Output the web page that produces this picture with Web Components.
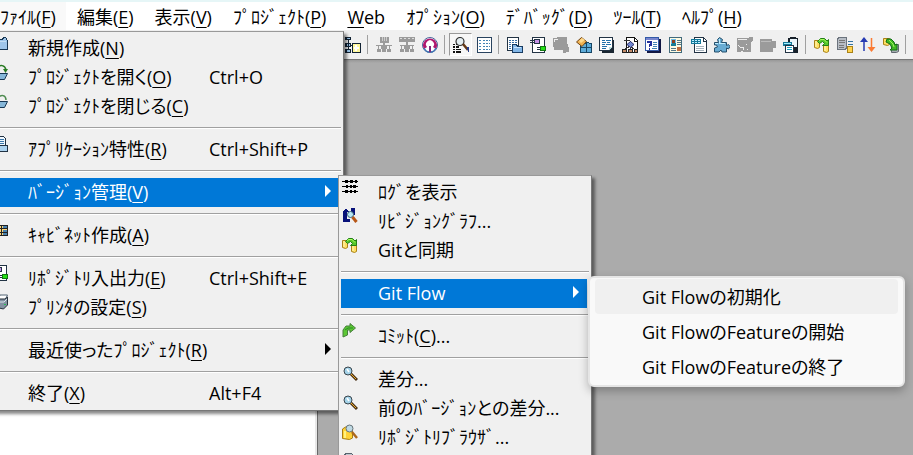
<!DOCTYPE html>
<html lang="ja">
<head>
<meta charset="utf-8">
<title>Git Flow</title>
<style>
html,body{height:100%}
body{margin:0;overflow:hidden;background:#ababab;color:#000;font:18px/29px "Open Sans","Noto Sans CJK JP",sans-serif;font-feature-settings:"palt"}
</style>
</head>
<body>
<app-window>
  <menu-bar slot="menubar">
    <bar-item open>ﾌｧｲﾙ(<u>F</u>)</bar-item>
    <bar-item>編集(<u>E</u>)</bar-item>
    <bar-item>表示(<u>V</u>)</bar-item>
    <bar-item>ﾌﾟﾛｼﾞｪｸﾄ(<u>P</u>)</bar-item>
    <bar-item><u>W</u>eb</bar-item>
    <bar-item>ｵﾌﾟｼｮﾝ(<u>O</u>)</bar-item>
    <bar-item>ﾃﾞﾊﾞｯｸﾞ(<u>D</u>)</bar-item>
    <bar-item>ﾂｰﾙ(<u>T</u>)</bar-item>
    <bar-item>ﾍﾙﾌﾟ(<u>H</u>)</bar-item>
  </menu-bar>
  <tool-bar slot="toolbar" items="module | tree1 tree2 upload | find* list | sheetfolder inout grayshape cubes pages flow help card form puzzle graychart graybox device | sync serverdb updown pull |"></tool-bar>

  <menu-panel class="file" slot="popups">
    <menu-item icon="folder">新規作成(<u>N</u>)</menu-item>
    <menu-item icon="open" key="Ctrl+O">ﾌﾟﾛｼﾞｪｸﾄを開く(<u>O</u>)</menu-item>
    <menu-item icon="close">ﾌﾟﾛｼﾞｪｸﾄを閉じる(<u>C</u>)</menu-item>
    <menu-line></menu-line>
    <menu-item icon="props" key="Ctrl+Shift+P">ｱﾌﾟﾘｹｰｼｮﾝ特性(<u>R</u>)</menu-item>
    <menu-line></menu-line>
    <menu-item active sub>ﾊﾞｰｼﾞｮﾝ管理(<u>V</u>)</menu-item>
    <menu-line></menu-line>
    <menu-item icon="cabinet">ｷｬﾋﾞﾈｯﾄ作成(<u>A</u>)</menu-item>
    <menu-line></menu-line>
    <menu-item icon="inout" key="Ctrl+Shift+E">ﾘﾎﾟｼﾞﾄﾘ入出力(<u>E</u>)</menu-item>
    <menu-item icon="printer">ﾌﾟﾘﾝﾀの設定(<u>S</u>)</menu-item>
    <menu-line></menu-line>
    <menu-item sub>最近使ったﾌﾟﾛｼﾞｪｸﾄ(<u>R</u>)</menu-item>
    <menu-line></menu-line>
    <menu-item key="Alt+F4">終了(<u>X</u>)</menu-item>
  </menu-panel>

  <menu-panel class="version" slot="popups">
    <menu-item icon="log">ﾛｸﾞを表示</menu-item>
    <menu-item icon="graph">ﾘﾋﾞｼﾞｮﾝｸﾞﾗﾌ...</menu-item>
    <menu-item icon="sync">Gitと同期</menu-item>
    <menu-line></menu-line>
    <menu-item active sub>Git Flow</menu-item>
    <menu-line></menu-line>
    <menu-item icon="commit">ｺﾐｯﾄ(<u>C</u>)...</menu-item>
    <menu-line></menu-line>
    <menu-item icon="lens">差分...</menu-item>
    <menu-item icon="lens">前のﾊﾞｰｼﾞｮﾝとの差分...</menu-item>
    <menu-item icon="repo">ﾘﾎﾟｼﾞﾄﾘﾌﾞﾗｳｻﾞ...</menu-item>
    <menu-item icon="disc"></menu-item>
  </menu-panel>

  <flow-popup slot="popups">
    <flow-item hover>Git Flowの初期化</flow-item>
    <flow-item>Git FlowのFeatureの開始</flow-item>
    <flow-item>Git FlowのFeatureの終了</flow-item>
  </flow-popup>
</app-window>

<script>
const ICONS = {
module:'<path d="M0 0h6v3H0zM0 6h6v4H0zM0 12h6v4H0z" fill="#123"/><path d="M2 1h3v1H2zM2 7h3v2H2zM2 13h3v2H2z" fill="#9cc8ee"/><path d="M3 3v10M6 8h2" stroke="#123"/><path d="M7.500 6.500h8v9h-8z" fill="#fff79a" stroke="#123"/><path d="M11 8v6M9 11h5" stroke="#fff" stroke-width="2"/>',
tree1:'<path d="M4 0h9v6H4zM0 8h16v1H0zM7 6h2v6H7zM5 9h6v3H5zM2 9h1v3H2zM13 9h1v3h-1zM1 12h4v3H1zM6 12h4v3H6zM11 12h4v3h-4z" fill="#9b9b9b"/><path d="M6 0v4M8 0v4M10 0v4" stroke="#ccc"/>',
tree2:'<path d="M0 0h16v5H0zM7 5h2v7H7zM1 8h14v1H1zM5 9h6v3H5zM2 9h1v3H2zM13 9h1v3h-1zM1 12h4v3H1zM6 12h4v3H6zM11 12h4v3h-4z" fill="#9b9b9b"/><path d="M1 1.500h2M5 1.500h2M9 1.500h2M13 1.500h2" stroke="#ddd"/>',
upload:'<g shape-rendering="auto"><circle cx="8" cy="8" r="7.500" fill="#fff" stroke="#44639a"/><path d="M2 12a7 7 0 1 1 12 0l-3-2a4 4 0 1 0-6 0z" fill="#b0186f"/><path d="M8 3l4 5H9.500v5h-3V8H4z" fill="#fff"/><path d="M8 9v6" stroke="#7e2a7d" stroke-width="2"/><path d="M2 11q2 4 5 4M14 11q-2 4-5 4" stroke="#4176b4" fill="none" stroke-width="1.500"/></g>',
find:'<path d="M0 7.500h4M0 10h6M0 12.500h8M0 15h8" stroke="#111" stroke-width="1.500" stroke-dasharray="2 1 5 1"/><g shape-rendering="auto"><circle cx="7" cy="4.500" r="4" fill="#e4eef2" stroke="#333" stroke-width="1.200"/><path d="M10 7l5 6" stroke="#633817" stroke-width="2.500"/></g><path d="M14 10h2v5h-1z" fill="#263b88"/>',
list:'<path d="M1.500.5h14v15h-14z" fill="#fff" stroke="#29435f"/><path d="M3 3.500h2M3 6.500h2M3 9.500h2M3 12.500h2M7 3.500h7M7 6.500h7M7 9.500h7M7 12.500h7" stroke="#4383b4" stroke-dasharray="2 1"/>',
sheetfolder:'<path d="M.5.500h11v13H.5z" fill="#fff" stroke="#234"/><path d="M2 3.500h8M2 5.500h8M2 7.500h8M2 9.500h8M2 11.500h5" stroke="#3a6fa5" stroke-dasharray="2 1"/><path d="M5.500 7.500h4l1 2h5v6h-10z" fill="#83b7e8" stroke="#183c62"/><path d="M7 10.500h7" stroke="#c6e3ff"/>',
inout:'<path d="M2.500.5h12v15h-12z" fill="#fff" stroke="#234"/><path d="M0 3.500h5M0 5.500h5M7 10.500h4M7 12.500h4" stroke="#234"/><path d="M4.500 2.500h5v4h-5z" fill="#c691e8" stroke="#234"/><path d="M10.500 9.500h5v4h-5z" fill="#25df16" stroke="#171"/>',
grayshape:'<path d="M0 1h4V0h10v6l2 5v4h-3v1h-3v-3H1v-3H0z" fill="#9b9b9b"/><path d="M1.500 5V2.500h3" fill="none" stroke="#eee"/>',
cubes:'<path d="M4.500 6.500h5v-1l6 1v9h-11z" fill="#5eacda" stroke="#174665"/><path d="M10.500 5v10M5 10.500h11" stroke="#174665"/><g shape-rendering="auto"><path d="M.5 5l5-4.500 5 4-4.500 5z" fill="#efb050" stroke="#714514"/><path d="M3 4l3-3 3 2-4 3z" fill="#ffd98b"/></g>',
pages:'<path d="M3 3h12v13H3z" fill="#1b2732"/><path d="M.5.500h13v10l-3 3H.5z" fill="#fff" stroke="#234"/><path d="M3 3.500h3M7 3.500h5M3 5.500h4M8 5.500h3M3 7.500h3M7 7.500h5M3 9.500h5M3 11.500h4" stroke="#2471aa"/><path d="M10 13v-3h3z" fill="#bdd"/>',
flow:'<path d="M4.500.5h8l3 3v12h-11z" fill="#fff" stroke="#111"/><path d="M12.500 1v3h3" fill="none" stroke="#111"/><path d="M2 3.500h6M8.500 4v10M8 9l-6 4M8 9l5 4" stroke="#333" fill="none"/><path d="M5 7.500l3.500-3 3.500 3-3.500 3z" fill="#7389d2" stroke="#29306d" shape-rendering="auto"/><path d="M.5 12.500h4v3h-4zM6.500 12.500h4v3h-4zM12 12.500h3v3h-3z" fill="#c48b68" stroke="#222"/>',
help:'<path d="M2 2h14v14H2z" fill="#111743"/><path d="M.5.500h13v13H.5z" fill="#fff" stroke="#345aa8"/><path d="M1 1h12v2H1z" fill="#7986ce"/><path d="M3 6V5h3v3H4.500v2M4.500 11v2" fill="none" stroke="#23309c" stroke-width="1.500"/><path d="M8 5.500h4M8 7.500h4M8 9.500h4M7 11.500h5" stroke="#4383b4"/>',
card:'<path d="M1.500.5h12v15h-12z" fill="#fffbe2" stroke="#426a7b"/><path d="M3 2h5v7H3z" fill="#6dbbe9"/><path d="M4 3h3v3H4z" fill="#8b401e"/><path d="M4 6h4v3H3V7z" fill="#167d96"/><path d="M9 3.500h4M9 5.500h4M9 7.500h4M3 11.500h5M3 13.500h5" stroke="#537688"/><path d="M9 10h4v4H9z" fill="#c27040"/>',
form:'<path d="M3.500.5h9l3 3v12h-12z" fill="#fff" stroke="#234"/><path d="M0 2h10v5H0z" fill="#12799b"/><path d="M1 3.500h8M1 5.500h8" stroke="#c4efff" stroke-dasharray="2 1"/><path d="M5 9.500h8M5 11.500h8M5 13.500h8" stroke="#a7b3bd"/><path d="M12.500 1v3h3" fill="none" stroke="#234"/>',
puzzle:'<path d="M.5 5.500h4l-1-3 2-2 3 2-1 3h5v3l2-1 1.500 2-1.500 2.500-2-1v4H8l-1-2-2 2H.5v-4l3-1-1-2h-2z" fill="#69acd3" stroke="#254f6b" shape-rendering="auto"/><path d="M5 2v4h6M1 6.500h3" fill="none" stroke="#c1edff"/>',
graychart:'<path d="M0 1h12V0h4v3l-2 3v9H0z" fill="#9b9b9b"/><path d="M1 2.500h9M1 8l2 2h3v3M9.500 7v1M10 12.500h1M4 14.500h2" fill="none" stroke="#eee"/>',
graybox:'<path d="M0 2h12v2h4v7h-3v4H0z" fill="#9b9b9b"/><path d="M1 4.500h10" stroke="#bbb"/>',
device:'<path d="M5 1h2V0h6v1h2v15H5z" fill="#17202a"/><path d="M7 2h7v8H7z" fill="#eaf5fb"/><path d="M0 5h9v4H0z" fill="#147898"/><path d="M1 6.500h7" stroke="#a5efff"/><path d="M2.500 8.500h8v7h-8z" fill="#fff" stroke="#234"/><path d="M4 10.500h5M4 12.500h5" stroke="#18a1c4"/>',
sync:'<g shape-rendering="auto"><path d="M.5 3.500h5v7l-2 1-3-1z" fill="#ffdf63" stroke="#a98218"/><path d="M9.500 7.500h5v7l-2 1-3-1z" fill="#ffdf63" stroke="#a98218"/><path d="M2 4v6M11 9v5" stroke="#fff9bb" fill="none"/><path d="M3.500 4.500l3-3h4l2.500 2.500 1.500-1.500v6h-6l2-2-2-2-3 2z" fill="#55c729" stroke="#237e17"/><path d="M5 3.500l2-1h3l3 3" fill="none" stroke="#a9ff61"/></g>',
serverdb:'<path d="M.5 1.500l2-1h7v11l-2 1H.5z" fill="#b7bdc5" stroke="#6b737d"/><path d="M2 3.500h6M2 5.500h6M2 8.500h5M2 10.500h5" stroke="#777"/><path d="M11 4.500h5M11 7.500h5" stroke="#3474a1"/><path d="M10.500 10l1-1h3l1 1v5l-1 .5h-3l-1-.5z" fill="#ffd34e" stroke="#a98218"/>',
updown:'<g shape-rendering="auto"><path d="M4 2v12" stroke="#263ab3" stroke-width="1.500"/><path d="M0 5l4-5 4 5z" fill="#263ab3"/><path d="M11.500 1v12" stroke="#fb7b33" stroke-width="1.500"/><path d="M7.500 10l4 5 4-5z" fill="#fb7b33"/></g>',
pull:'<g shape-rendering="auto"><path d="M.5 1.500h6v6l-2 1-4-1z" fill="#ffdf63" stroke="#a98218"/><path d="M8.500 7.500h7v7l-2 1h-5z" fill="#a6acb2" stroke="#626970"/><path d="M10 10h4M10 12.500h4" stroke="#ddd"/><path d="M4 2h4l3 3 1 3 2-1v6H7l2-2-2-4-4-2z" fill="#40b923" stroke="#126d18"/><path d="M6 3l4 4 1 3" stroke="#9ff15f" fill="none"/></g>',
folder:'<path d="M1.500 4.500h9l1-2h2l2 3v9h-14z" fill="#9ec5ea" stroke="#173653"/><path d="M2 6.500h12" stroke="#c3def4"/>',
open:'<g shape-rendering="auto"><path d="M1 9.500h14.500l-3 6H2z" fill="#86b7d9" stroke="#173653"/><path d="M5 4c3-4 8-3 9 2" fill="none" stroke="#287a22" stroke-width="1.500"/><path d="M11 5h5l-2.500 4z" fill="#287a22"/></g>',
close:'<g shape-rendering="auto"><path d="M1 8.500h14.500l-3 6H2z" fill="#86b7d9" stroke="#173653"/><path d="M6 5c3-4 8-3 8 2" fill="none" stroke="#4e8b50" stroke-width="1.500"/></g>',
props:'<path d="M6.500.5h5l2 2v7h-7z" fill="#eff8ff" stroke="#234"/><path d="M8 3.500h4M8 5.500h4M8 7.500h4" stroke="#3b77aa"/><path d="M3.500 9.500h12v6h-12z" fill="#acd2ee" stroke="#234"/>',
cabinet:'<path d="M3.500 3.500h12v10h-12z" fill="#ffd777" stroke="#222"/><path d="M9.500 4v9M4 6.500h12M4 10.500h12" stroke="#222"/><path d="M11 5h4M11 8.500h4M11 12h4" stroke="#4a83af" stroke-width="2"/>',
printer:'<g shape-rendering="auto"><path d="M6 6l2-5h7.500l-3 6z" fill="#fff" stroke="#567"/><path d="M2 8l3-3h8l2.500-2v8l-4 4-9-2z" fill="#8492a2" stroke="#29333d"/><path d="M5 8h7l3-3" stroke="#d8e3eb" fill="none"/><path d="M12 10.500h2" stroke="#21bf53"/></g>',
log:'<path d="M0 2.500h16M0 7.500h16M0 12.500h16" stroke="#000"/><path d="M3 1h3v3H3zM8 1h3v3H8zM13 1h2v3h-2zM4 6h2v3H4zM8 6h2v3H8zM11 6h3v3h-3zM3 11h3v3H3zM8 11h2v3H8zM12 11h2v3h-2z" fill="#000"/>',
graph:'<path d="M0 4l4-4 3 4H5v7h3v3H1V4zM9 0h4v7H9z" fill="#071179"/><g shape-rendering="auto"><circle cx="8.500" cy="6.500" r="3" fill="#b7e8f5" stroke="#3b6277"/><path d="M10.500 9l4 5" stroke="#b75616" stroke-width="3"/></g>',
commit:'<g shape-rendering="auto"><path d="M1 7l3-4h4V.500L13.500 5 8 9.500V7H5.500v5L1 14z" fill="#5cc735" stroke="#477e3c"/><path d="M3 7l3-2h5" fill="none" stroke="#278c22"/></g>',
lens:'<g shape-rendering="auto"><circle cx="6" cy="5" r="4" fill="#a3d2e8" stroke="#39444b"/><path d="M5 3l2 3" stroke="#fff" stroke-width="1.500"/><path d="M9 8l6 6" stroke="#493016" stroke-width="3"/><path d="M9 8l5 5" stroke="#ecae2a"/></g>',
repo:'<g shape-rendering="auto"><path d="M.5 5l3-2h7v11l-3 1.500-7-1z" fill="#ffd236" stroke="#a77d11"/><path d="M3 7v7" stroke="#fff17f" stroke-width="2"/><circle cx="7.500" cy="4.500" r="3.500" fill="#bfd9e3" stroke="#66747b"/><path d="M10 8l5 6" stroke="#ad681d" stroke-width="2.500"/></g>',
disc:'<path d="M2 2l3-2h4l3 3v8H2z" fill="#bdc7cf" stroke="#58636d"/>'
};
const svg = n => ICONS[n] ? `<svg viewBox="0 0 16 16" width="16" height="16" shape-rendering="crispEdges" aria-hidden="true">${ICONS[n]}</svg>` : '';
const reset = 'button{font:inherit;font-feature-settings:inherit;color:inherit;border:0;margin:0;padding:0;background:none;text-align:left;white-space:nowrap}svg{display:block}::slotted(u){text-decoration:underline 1px;text-underline-offset:3px;text-decoration-skip-ink:none}';
function element(name, css, html){
  customElements.define(name, class extends HTMLElement{
    constructor(){
      super();
      this.attachShadow({mode:'open'}).innerHTML = `<style>${reset}${css}</style>${typeof html === 'function' ? html(this) : html}`;
    }
  });
}
element('app-window',
 `:host{display:grid;grid-template-rows:2px auto auto 1fr;height:100vh;position:relative;overflow:hidden}
  .cap{background:#e6f6f7}
  .desk{display:grid;grid-template-columns:35% 1fr;background:linear-gradient(#989898,#ababab 3px);border-top:1px solid #777}
  .pane{background:#fff;border-right:2px solid #e8e8e8;box-shadow:1px 0 #696969;margin-right:3px}
  ::slotted(.file){position:absolute;left:-12px;top:31px;width:356px;z-index:1;--key:221px}
  ::slotted(.version){position:absolute;left:338px;top:175px;width:254px;z-index:2}
  ::slotted(flow-popup){position:absolute;left:588px;top:276px;width:317px;z-index:3}`,
 `<div class="cap"></div><slot name="menubar"></slot><slot name="toolbar"></slot><main class="desk"><div class="pane"></div></main><slot name="popups"></slot>`);
element('menu-bar', `:host{display:flex;height:28px;background:#fff}`, '<slot></slot>');
element('bar-item', `:host{display:block}button{padding:0 10px 0 11px;height:28px;line-height:30px}:host([open]){background:#f9f9f9}:host([open]) button{padding-left:0}`, '<button><slot></slot></button>');
element('tool-bar',
 `:host{display:flex;align-items:center;height:29px;padding-left:341px;background:#f0f0f0}
  button{flex:none;width:23px;height:23px;display:grid;place-items:center;box-sizing:border-box;padding-top:1px}
  button.on{border:1px solid;border-color:#999 #fff #fff #999;background:#f7f7f7}
  i{flex:none;width:1px;height:19px;background:#a0a0a0;margin:0 4px 0 3px}`,
 h => h.getAttribute('items').split(' ').map(n => n === '|' ? '<i></i>' : `<button aria-label="${n.replace('*','')}" class="${n.endsWith('*') ? 'on' : ''}">${svg(n.replace('*',''))}</button>`).join(''));
element('menu-panel',
 `:host{display:block;box-sizing:border-box;background:#f0f0f0;border:1px solid #999;border-right-color:#777;border-bottom-color:#777;padding:2px;box-shadow:3px 3px 3px #0007}`,
 '<slot></slot>');
element('menu-line', `:host{display:block;padding:6px 0}div{height:1px;background:#a0a0a0;border-bottom:1px solid #fff}`, '<div></div>');
element('menu-item',
 `:host{display:block;height:29px}
  button{width:calc(100% - 2px);height:29px;display:grid;grid-template-columns:37px 1fr;position:relative}
  .ic{padding:1px 0 0 1px}
  .k{position:absolute;left:calc(var(--key) - 3px);top:0}
  .a{position:absolute;right:8px;top:7px;border:solid transparent;border-width:6px 0 6px 6px;border-left-color:currentColor}
  :host([active]) button{background:#0078d7;color:#fff}`,
 h => `<button role="menuitem"><span class="ic">${svg(h.getAttribute('icon'))}</span><span><slot></slot></span>${h.hasAttribute('key') ? `<span class="k">${h.getAttribute('key')}</span>` : ''}${h.hasAttribute('sub') ? '<span class="a"></span>' : ''}</button>`);
element('flow-popup', `:host{display:block;box-sizing:border-box;background:#f9f9f9;border:2px solid #e5e5e5;border-radius:6px;padding:1px 5px;box-shadow:0 4px 10px #0004}`, '<slot></slot>');
element('flow-item', `:host{display:block}button{width:100%;height:35px;padding-left:47px;line-height:37px;border-radius:4px}:host([hover]) button{background:#f0f0f0}`, '<button role="menuitem"><slot></slot></button>');
</script>
</body>
</html>
